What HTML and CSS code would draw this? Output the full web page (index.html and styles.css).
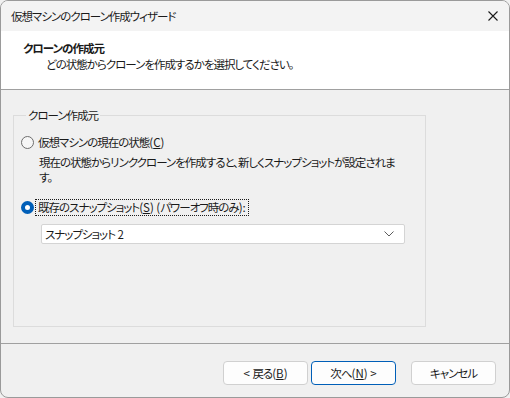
FILE: index.html
```html
<!DOCTYPE html>
<html lang="ja">
<head>
    <meta charset="UTF-8">
    <title>仮想マシンのクローン作成ウィザード</title>
    <link rel="stylesheet" href="styles.css">
</head>
<body>
    <div class="window">
        <div class="titlebar">
            <span class="title">仮想マシンのクローン作成ウィザード</span>
            <svg class="close" width="10" height="10" viewBox="0 0 10 10">
                <path d="M0.5 0.5 L9.5 9.5 M9.5 0.5 L0.5 9.5" stroke="#1a1a1a" stroke-width="1.1" fill="none"/>
            </svg>
        </div>

        <div class="header">
            <div class="heading">クローンの作成元</div>
            <div class="subtitle">どの状態からクローンを作成するかを選択してください。</div>
        </div>

        <div class="content">
            <fieldset class="group">
                <legend>クローン作成元</legend>

                <div class="option">
                    <span class="radio"></span>
                    <span class="label">仮想マシンの現在の状態<span class="en">(<u>C</u>)</span></span>
                </div>
                <p class="desc">現在の状態からリンククローンを作成すると、新しくスナップショットが設定されま<br>す。</p>

                <div class="option second">
                    <span class="radio checked"></span>
                    <span class="label focused">既存のスナップショット<span class="en">(<u>S</u>) (</span>パワーオフ時のみ<span class="en">):</span></span>
                </div>
                <div class="select">
                    <span>スナップショット<span class="en"> 2</span></span>
                    <svg width="10" height="6" viewBox="0 0 10 6">
                        <path d="M0.5 0.5 L5 5 L9.5 0.5" stroke="#5c5c5c" stroke-width="1" fill="none"/>
                    </svg>
                </div>
            </fieldset>
        </div>

        <div class="footer">
            <button class="btn"><span class="en">&lt; </span>戻る<span class="en">(<u>B</u>)</span></button>
            <button class="btn primary">次へ<span class="en">(<u>N</u>) &gt;</span></button>
            <button class="btn cancel">キャンセル</button>
        </div>
    </div>
</body>
</html>
```

FILE: styles.css
```css
body {
    margin: 0;
    font-family: "Noto Sans CJK JP", "Noto Sans", sans-serif;
    font-size: 11.5px;
    line-height: 16px;
    letter-spacing: -1px;
    color: #1a1a1a;
    font-feature-settings: "palt";
    background: #f0f0f0;
}
.en {
    letter-spacing: 0;
}
.window {
    box-sizing: border-box;
    width: 510px;
    height: 398px;
    border: 1px solid #9a9a9a;
    border-radius: 8px;
    overflow: hidden;
    background: #f0f0f0;
    display: flex;
    flex-direction: column;
}
.titlebar {
    height: 30px;
    flex: none;
    display: flex;
    align-items: center;
    justify-content: space-between;
    padding: 0 11px 0 10px;
    background: #f3f3f3;
}
.title {
    line-height: 30px;
}
.close {
    margin-top: -1px;
}
.header {
    height: 59px;
    flex: none;
    box-sizing: border-box;
    padding: 9px 0 0 22px;
    background: #ffffff;
    border-bottom: 1px solid #a0a0a0;
}
.heading {
    font-weight: bold;
}
.subtitle {
    margin-left: 23px;
}
.content {
    height: 254px;
    flex: none;
    box-sizing: border-box;
    padding: 17px 0 0 12px;
    border-bottom: 1px solid #a0a0a0;
}
.group {
    box-sizing: border-box;
    width: 413px;
    height: 220px;
    margin: 0;
    padding: 11px 0 0 7px;
    border: 1px solid #dcdcdc;
    min-width: 0;
}
.group legend {
    padding: 0 2px;
    margin-left: 5px;
    line-height: 16px;
}
.option {
    display: flex;
    align-items: center;
    height: 16px;
}
.second {
    margin-top: 14px;
}
.radio {
    box-sizing: border-box;
    width: 13px;
    height: 13px;
    border: 1px solid #6e6e6e;
    border-radius: 50%;
    background: #f6f6f6;
    margin-right: 4px;
    flex: none;
}
.radio.checked {
    border: 4px solid #005fb8;
    background: #ffffff;
    margin-right: 2px;
}
.label.focused {
    outline: 1px dotted #1a1a1a;
    padding: 0 2px;
    line-height: 15px;
}
.desc {
    margin: 5px 0 0 18px;
    line-height: 15px;
}
.select {
    box-sizing: border-box;
    width: 364px;
    height: 20px;
    margin: 9px 0 0 20px;
    padding: 0 10px 0 3px;
    display: flex;
    align-items: center;
    justify-content: space-between;
    background: #ffffff;
    border: 1px solid #d4d4d4;
    border-radius: 2px;
}
.footer {
    flex: 1;
    display: flex;
    justify-content: flex-end;
    align-items: flex-start;
    padding: 17px 13px 0 0;
}
.btn {
    box-sizing: border-box;
    width: 85px;
    height: 24px;
    padding: 0;
    font-family: inherit;
    font-size: 11.5px;
    letter-spacing: -1px;
    font-feature-settings: "palt";
    color: #1a1a1a;
    background: #fdfdfd;
    border: 1px solid #d0d0d0;
    border-radius: 4px;
}
.btn.primary {
    margin-left: 3px;
    border-color: #005fb8;
}
.btn.cancel {
    margin-left: 15px;
}
```
